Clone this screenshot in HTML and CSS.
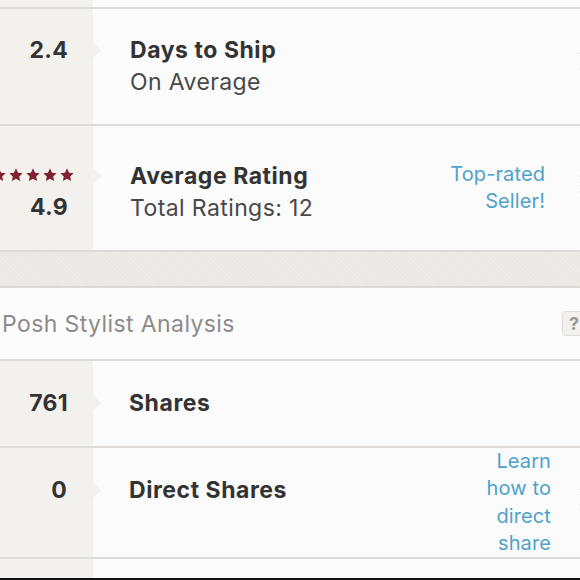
FILE: index.html
```html
<!DOCTYPE html>
<html>
<head>
<meta charset="utf-8">
<link rel="stylesheet" href="styles.css">
</head>
<body>
<div class="page">
  <div class="row row-top">
    <div class="val"></div>
    <div class="body"></div>
  </div>

  <div class="row row-ship">
    <div class="val"><div class="num">2.4</div></div>
    <div class="body">
      <div class="text">
        <div class="title">Days to Ship</div>
        <div class="sub">On Average</div>
      </div>
      <span class="chev chev-a"></span>
    </div>
  </div>

  <div class="row row-rating">
    <div class="val">
      <div class="stars">
        <svg viewBox="0 0 12 12" class="star"><path d="M6 0.3 L7.75 4.0 L11.71 4.45 L8.75 7.2 L9.53 11.15 L6 9.2 L2.47 11.15 L3.25 7.2 L0.29 4.45 L4.25 4.0 Z"/></svg>
        <svg viewBox="0 0 12 12" class="star"><path d="M6 0.3 L7.75 4.0 L11.71 4.45 L8.75 7.2 L9.53 11.15 L6 9.2 L2.47 11.15 L3.25 7.2 L0.29 4.45 L4.25 4.0 Z"/></svg>
        <svg viewBox="0 0 12 12" class="star"><path d="M6 0.3 L7.75 4.0 L11.71 4.45 L8.75 7.2 L9.53 11.15 L6 9.2 L2.47 11.15 L3.25 7.2 L0.29 4.45 L4.25 4.0 Z"/></svg>
        <svg viewBox="0 0 12 12" class="star"><path d="M6 0.3 L7.75 4.0 L11.71 4.45 L8.75 7.2 L9.53 11.15 L6 9.2 L2.47 11.15 L3.25 7.2 L0.29 4.45 L4.25 4.0 Z"/></svg>
        <svg viewBox="0 0 12 12" class="star"><path d="M6 0.3 L7.75 4.0 L11.71 4.45 L8.75 7.2 L9.53 11.15 L6 9.2 L2.47 11.15 L3.25 7.2 L0.29 4.45 L4.25 4.0 Z"/></svg>
      </div>
      <div class="num">4.9</div>
    </div>
    <div class="body">
      <div class="text">
        <div class="title">Average Rating</div>
        <div class="sub">Total Ratings: 12</div>
      </div>
      <div class="link link-rated">Top-rated<br>Seller!</div>
      <span class="chev chev-b"></span>
    </div>
  </div>

  <div class="band"></div>

  <div class="header">
    <div class="header-title">Posh Stylist Analysis</div>
    <div class="help">?</div>
  </div>

  <div class="row row-shares">
    <div class="val"><div class="num">761</div></div>
    <div class="body">
      <div class="text"><div class="title">Shares</div></div>
    </div>
  </div>

  <div class="row row-direct">
    <div class="val"><div class="num">0</div></div>
    <div class="body">
      <div class="text"><div class="title">Direct Shares</div></div>
      <div class="link link-direct">Learn<br>how to<br>direct<br>share</div>
      <span class="chev chev-c"></span>
    </div>
  </div>

  <div class="row row-bottom">
    <div class="val"></div>
    <div class="body"></div>
  </div>
  <div class="blackbar"></div>
</div>
</body>
</html>
```

FILE: styles.css
```css
* { box-sizing: border-box; }
html, body { margin: 0; padding: 0; }
body {
  width: 580px;
  height: 580px;
  overflow: hidden;
  background: #fcfbfb;
  font-family: Inter, "Open Sans", sans-serif;
  color: #333;
}
.page { width: 580px; }

.row {
  display: flex;
  border-bottom: 2px solid #dddad7;
}
.val {
  width: 93px;
  flex: none;
  background: #f3f1ee;
  text-align: right;
  padding-right: 25px;
  overflow: hidden;
}
.body {
  flex: 1;
  position: relative;
  display: flex;
  align-items: flex-start;
  background: #fcfbfb;
}
.body::before {
  content: "";
  position: absolute;
  left: 0;
  top: var(--notch, 40px);
  border-left: 8px solid #f3f1ee;
  border-top: 8px solid transparent;
  border-bottom: 8px solid transparent;
}
.num {
  font-size: 23px;
  font-weight: 700;
  line-height: 32px;
  color: #333;
  letter-spacing: 0.3px;
}
.text { flex: 1; padding-left: 37px; }
.title {
  font-size: 23px;
  font-weight: 700;
  line-height: 32px;
  color: #333;
  letter-spacing: 0.55px;
}
.sub {
  font-size: 23px;
  font-weight: 400;
  line-height: 32px;
  color: #484848;
  letter-spacing: 0.4px;
}
.link {
  color: #4ea2c9;
  font-size: 20px;
  line-height: 27.25px;
  text-align: right;
  letter-spacing: 0.1px;
}

.row-top { height: 9px; }
.row-top .body::before { display: none; }

.row-ship .val, .row-ship .body { padding-top: 25px; padding-bottom: 26px; }
.row-ship .body { --notch: 33px; }

.row-rating .val { padding-top: 33px; padding-right: 20px; }
.row-rating .body { padding-top: 34px; padding-bottom: 26px; --notch: 42px; }
.row-rating .num { padding-right: 5px; margin-top: 0; }
.stars { display: flex; justify-content: flex-end; gap: 3px; height: 32px; align-items: center; white-space: nowrap; margin-right: -1px; }
.star { width: 14px; height: 14px; fill: #7e2233; flex: none; }
.link-rated { padding-right: 35px; padding-top: 1px; }

.band {
  height: 36px;
  background: #ebe8e4;
  border-bottom: 2px solid #dcd9d5;
  background-image: repeating-linear-gradient(45deg, rgba(255,255,255,0.15) 0 1px, transparent 1px 3px);
}

.header {
  height: 73px;
  display: flex;
  align-items: center;
  justify-content: space-between;
  border-bottom: 2px solid #dddad7;
  background: #fdfcfc;
}
.header-title {
  font-size: 23px;
  color: #8d8b8a;
  padding-left: 2px;
  letter-spacing: 0.4px;
}
.help {
  width: 27px;
  height: 25px;
  margin-right: -9px;
  border: 1px solid #dddbd9;
  border-radius: 4px;
  background: #f2f1f0;
  color: #9a9896;
  font-weight: 700;
  font-size: 18px;
  line-height: 23px;
  padding-left: 6px;
}

.row-shares .val, .row-shares .body { padding-top: 26px; padding-bottom: 27px; }
.row-shares .body { --notch: 34px; }
.row-shares .text { padding-left: 36px; }

.row-direct .val { padding-top: 26px; padding-right: 26px; }
.row-direct .body { --notch: 34px; }
.row-direct .text { padding-top: 26px; padding-left: 36px; }
.row-direct .val, .row-direct .body { height: 109px; }
.link-direct { padding-right: 29px; padding-top: 0; }

.row-bottom { height: 19px; border-bottom: none; }
.row-bottom .body::before { display: none; }
.blackbar { height: 2px; background: #111; }

.chev {
  position: absolute;
  right: -6px;
  width: 12px;
  height: 12px;
  border-top: 1px solid #cfcdcb;
  border-right: 1px solid #cfcdcb;
  transform: rotate(45deg);
}
.chev-a { top: 46px; }
.chev-b { top: 52px; }
.chev-c { top: 43px; }
```
